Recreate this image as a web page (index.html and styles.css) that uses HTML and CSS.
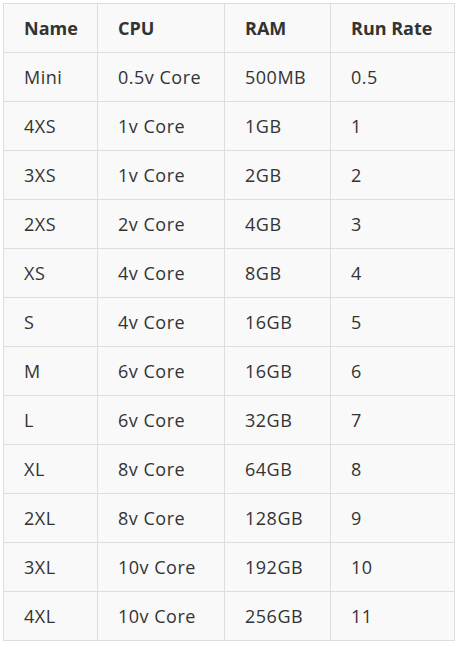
FILE: index.html
```html
<!DOCTYPE html>
<html>
<head>
<meta charset="utf-8">
<link rel="stylesheet" href="styles.css">
</head>
<body>
<table class="spec">
<colgroup><col class="c1"><col class="c2"><col class="c3"><col class="c4"></colgroup>
<thead>
<tr><th>Name</th><th>CPU</th><th>RAM</th><th>Run Rate</th></tr>
</thead>
<tbody>
<tr><td>Mini</td><td>0.5v Core</td><td>500MB</td><td>0.5</td></tr>
<tr><td>4XS</td><td>1v Core</td><td>1GB</td><td>1</td></tr>
<tr><td>3XS</td><td>1v Core</td><td>2GB</td><td>2</td></tr>
<tr><td>2XS</td><td>2v Core</td><td>4GB</td><td>3</td></tr>
<tr><td>XS</td><td>4v Core</td><td>8GB</td><td>4</td></tr>
<tr><td>S</td><td>4v Core</td><td>16GB</td><td>5</td></tr>
<tr><td>M</td><td>6v Core</td><td>16GB</td><td>6</td></tr>
<tr><td>L</td><td>6v Core</td><td>32GB</td><td>7</td></tr>
<tr><td>XL</td><td>8v Core</td><td>64GB</td><td>8</td></tr>
<tr><td>2XL</td><td>8v Core</td><td>128GB</td><td>9</td></tr>
<tr><td>3XL</td><td>10v Core</td><td>192GB</td><td>10</td></tr>
<tr><td>4XL</td><td>10v Core</td><td>256GB</td><td>11</td></tr>
</tbody>
</table>
</body>
</html>
```

FILE: styles.css
```css
html, body {
  margin: 0;
  padding: 0;
  background: #ffffff;
}
body {
  padding: 3px 0 0 3px;
  font-family: "Open Sans", Lato, sans-serif;
  color: #333333;
}
.spec {
  border-collapse: collapse;
  table-layout: fixed;
  width: 451px;
  background: #f9f9f9;
  font-size: 18px;
}
.c1 { width: 94px; }
.c2 { width: 127px; }
.c3 { width: 106px; }
.c4 { width: 124px; }
.spec th, .spec td {
  border: 1px solid #dddddd;
  height: 49px;
  padding: 0 0 0 20px;
  text-align: left;
  vertical-align: middle;
  box-sizing: border-box;
  line-height: 20px;
}
.spec th {
  font-weight: 700;
  font-size: 18px;
}
.spec td {
  font-weight: 400;
  letter-spacing: 0.5px;
}
```
